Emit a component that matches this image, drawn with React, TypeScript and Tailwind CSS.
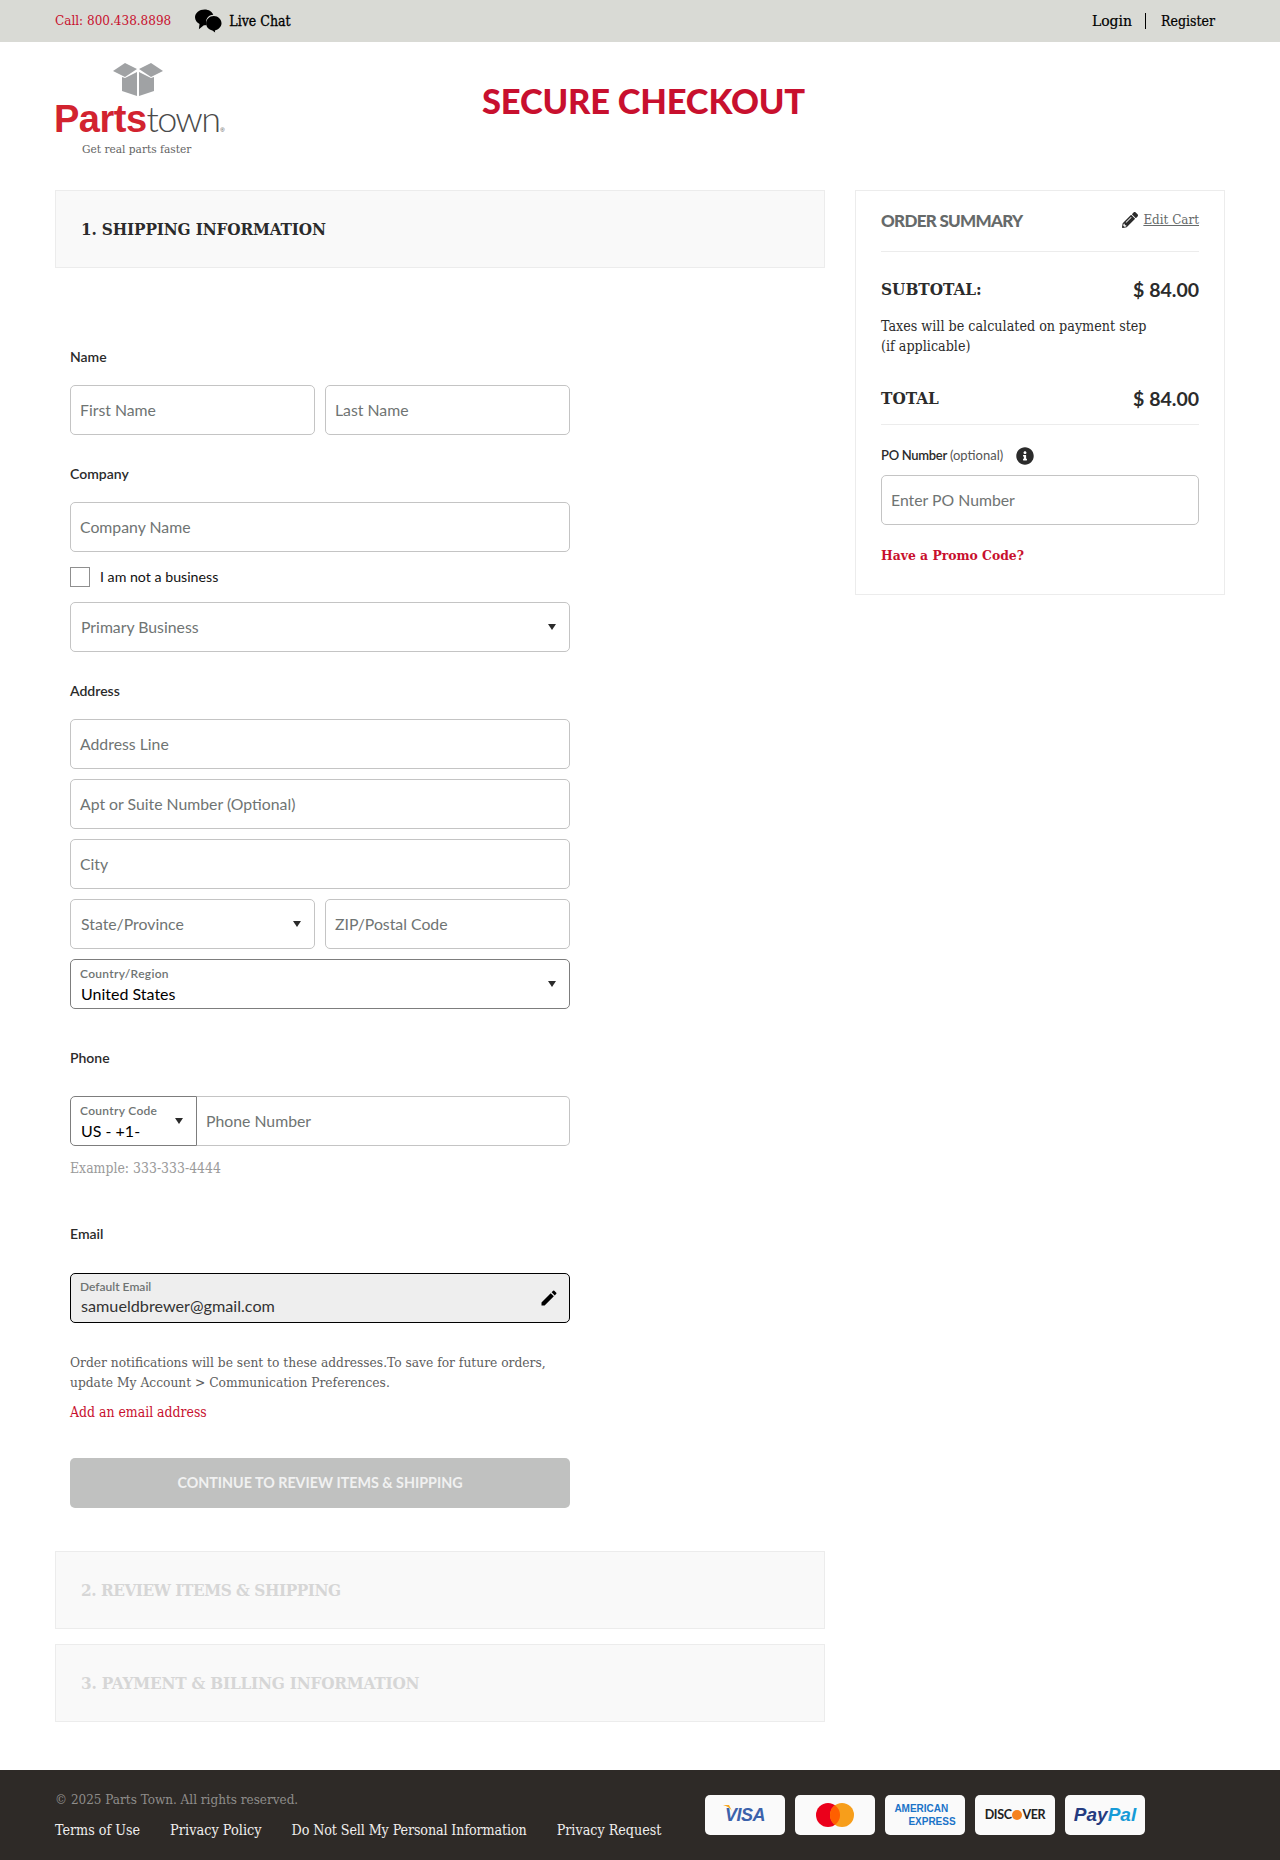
import { FaPencilAlt, FaInfoCircle } from "react-icons/fa";
import { MdEdit } from "react-icons/md";

const sans = "font-['Lato',sans-serif]";
const slab = "font-['DejaVu_Serif_Condensed','DejaVu_Serif',serif]";

function Arrow() {
  return (
    <svg width="8" height="6" viewBox="0 0 8 6" className="shrink-0">
      <polygon points="0,0 8,0 4,6" fill="#2b2b2b" />
    </svg>
  );
}

function Label({ children }: { children: React.ReactNode }) {
  return <div className={`${sans} h-5 text-[14px] leading-5 font-semibold text-[#2b2b2b]`}>{children}</div>;
}

function Field({ text, className = "" }: { text: string; className?: string }) {
  return (
    <div className={`${sans} flex h-[50px] items-center rounded-[5px] border border-[#c4c4c4] bg-white px-[9px] text-[15.800px] text-[#6f7473] ${className}`}>
      {text}
    </div>
  );
}

function SelectField({ text, className = "" }: { text: string; className?: string }) {
  return (
    <div className={`${sans} flex h-[50px] items-center justify-between rounded-[5px] border border-[#c4c4c4] bg-white pr-[13px] pl-[10px] text-[15.800px] text-[#6f7473] ${className}`}>
      <span>{text}</span>
      <Arrow />
    </div>
  );
}

function Floating({ label, value, className = "" }: { label: string; value: string; className?: string }) {
  return (
    <div className={`${sans} flex h-[50px] items-center justify-between border border-[#7d7d7d] bg-white pr-[13px] pl-[9px] ${className}`}>
      <div className="flex h-full flex-col pt-[7px]">
        <span className="text-[12px] leading-[14px] font-semibold tracking-[0.3px] text-[#6f7473]">{label}</span>
        <span className="mt-[2px] pl-px text-[16px] leading-[22px] text-black">{value}</span>
      </div>
      <Arrow />
    </div>
  );
}

function StepBox({ text, className = "" }: { text: string; className?: string }) {
  return (
    <div className={`${slab} flex h-[78px] items-center border border-[#ececec] bg-[#f9f9f9] px-[25px] pt-[2px] text-[17px] font-bold ${className}`}>
      {text}
    </div>
  );
}

function Logo() {
  return (
    <div className="relative h-[110px] w-[172px] pt-[20px]">
      <svg width="50" height="34" viewBox="0 0 50 34" className="ml-[58px] block">
        <polygon points="0,9 12,1 24,7 12,15" fill="#a0a2a4" />
        <polygon points="26,7 38,1 50,9 38,15" fill="#a0a2a4" />
        <polygon points="9,15 12,16 24,10 24,34 9,29" fill="#a0a2a4" />
        <polygon points="26,10 38,16 41,15 41,29 26,34" fill="#a0a2a4" />
      </svg>
      <div className="mt-[3px] -ml-px flex items-baseline text-[38px] leading-[38px] tracking-[-0.5px]">
        <span className="font-['Liberation_Sans',sans-serif] font-bold text-[#d2232f]">Parts</span>
        <span className="font-['Lato',sans-serif] text-[36px] font-light tracking-[-1.700px] text-[#4a4a4a]">town</span>
        <span className="ml-px font-['Liberation_Sans',sans-serif] text-[6px] leading-none text-[#4a4a4a]">®</span>
      </div>
      <div className={`${slab} mt-[4px] pl-[27px] text-[11.800px] leading-[15px] text-[#636363]`}>Get real parts faster</div>
    </div>
  );
}

function Chat() {
  return (
    <svg width="27" height="24" viewBox="0 0 28 24">
      <path d="M10 0C4.500 0 0 3.600 0 8.200c0 3 1.900 5.500 4.700 7L4 20.500l5.200-4.200c.9 0 1.800 0 2.800-.2C10 10 14 5.800 19 5.600 17.800 2.300 14.300 0 10 0z" fill="#000" />
      <path d="M19.500 6.800c-4.500 0-8 3.400-8 7.600 0 3.700 2.800 6.800 6.500 7.400l2.900 2.200-.3-2.200c3.800-.9 6.900-3.900 6.900-7.400 0-4.200-3.500-7.600-8-7.600z" fill="#000" />
    </svg>
  );
}

function PayCard({ children }: { children: React.ReactNode }) {
  return <div className="flex h-10 w-20 items-center justify-center overflow-hidden rounded-[5px] bg-[#fafafa]">{children}</div>;
}

export default function App() {
  return (
    <div className={`${slab} min-h-[1860px] bg-white`}>
      <div className="flex h-[42px] items-center justify-between bg-[#d9dad5] pr-[65px] pl-[55px] text-[14px]">
        <div className="flex items-center">
          <span className="text-[13.400px] text-[#c8102e]">Call: 800.438.8898</span>
          <span className="ml-6 flex items-center gap-[7px] text-black">
            <Chat />
            <span className="[-webkit-text-stroke:0.3px_#000]">Live Chat</span>
          </span>
        </div>
        <div className="flex items-center text-black [-webkit-text-stroke:0.2px_#000]">
          <span className="mt-px text-[15.500px]">Login</span>
          <span className="mr-[15px] ml-[13px] h-4 w-px bg-black" />
          <span>Register</span>
        </div>
      </div>

      <div className="flex h-[148px] items-start px-[55px]">
        <Logo />
        <h1 className={`${sans} mt-[37px] ml-[255px] text-[34.500px] leading-11 font-black tracking-[-0.2px] text-[#c8102e]`}>SECURE CHECKOUT</h1>
      </div>

      <div className="flex gap-[30px] px-[55px]">
        <div className="w-[770px]">
          <StepBox text="1. SHIPPING INFORMATION" className="tracking-[-0.15px] text-[#2b2b2b]" />

          <div className="mt-[79px] w-[515px] pl-[15px]">
            <Label>Name</Label>
            <div className="mt-[18px] grid grid-cols-2 gap-[10px]">
              <Field text="First Name" />
              <Field text="Last Name" />
            </div>

            <div className="mt-[29px]"><Label>Company</Label></div>
            <Field text="Company Name" className="mt-[18px]" />
            <div className={`${sans} mt-[15px] flex h-5 items-center gap-[10px] text-[14.200px] text-[#111]`}>
              <span className="h-5 w-5 border border-[#8f8f8f] bg-white" />
              <span className="-mt-px">I am not a business</span>
            </div>
            <SelectField text="Primary Business" className="mt-[15px]" />

            <div className="mt-[29px]"><Label>Address</Label></div>
            <div className="mt-[18px] flex flex-col gap-[10px]">
              <Field text="Address Line" />
              <Field text="Apt or Suite Number (Optional)" />
              <Field text="City" />
              <div className="grid grid-cols-2 gap-[10px]">
                <SelectField text="State/Province" />
                <Field text="ZIP/Postal Code" />
              </div>
              <Floating label="Country/Region" value="United States" className="rounded-[5px]" />
            </div>

            <div className="mt-[39px]"><Label>Phone</Label></div>
            <div className="mt-[28px] flex">
              <Floating label="Country Code" value="US - +1-" className="w-[127px] rounded-l-[5px]" />
              <Field text="Phone Number" className="flex-1 rounded-l-none border-l-0" />
            </div>
            <div className="mt-3 text-[13.900px] leading-5 text-[#9a9a9a]">Example: 333-333-4444</div>

            <div className="mt-[46px]"><Label>Email</Label></div>
            <div className={`${sans} mt-[29px] flex h-[50px] items-center justify-between rounded-[5px] border border-black bg-[#eeeeee] pr-[10px] pl-[9px]`}>
              <div className="flex h-full flex-col pt-[6px]">
                <span className="text-[12px] leading-[14px] font-semibold text-[#6f7473]">Default Email</span>
                <span className="mt-[1px] pl-px text-[16.200px] leading-[22px] text-[#333]">samueldbrewer@gmail.com</span>
              </div>
              <MdEdit className="text-[20px] text-black" />
            </div>

            <p className="mt-[29px] text-[13.650px] leading-5 text-[#5d5d5d]">
              Order notifications will be sent to these addresses.To save for future orders,<br />
              update My Account &gt; Communication Preferences.
            </p>
            <div className="mt-[10px] text-[13.900px] leading-5 text-[#c8102e]">Add an email address</div>

            <div className={`${sans} mt-9 flex h-[50px] items-center justify-center rounded-[5px] bg-[#c0c1c0] pb-px text-[14.300px] font-bold text-[#f1f1f1]`}>
              CONTINUE TO REVIEW ITEMS &amp; SHIPPING
            </div>
          </div>

          <div className="mt-[43px] flex flex-col gap-[15px]">
            <StepBox text="2. REVIEW ITEMS & SHIPPING" className="tracking-[-0.45px] text-[#d6d6d6]" />
            <StepBox text="3. PAYMENT & BILLING INFORMATION" className="tracking-[-0.2px] text-[#d6d6d6]" />
          </div>
        </div>

        <aside className="h-[405px] w-[370px] border border-[#ececec] px-[25px] text-[#2b2b2b]">
          <div className="flex h-[61px] items-start justify-between border-b border-[#ececec] pt-[18px]">
            <span className={`${sans} text-[17px] leading-6 font-black tracking-[-0.7px] text-[#666a6a]`}>ORDER SUMMARY</span>
            <span className="mt-px flex items-center gap-[5px] text-[13.300px] leading-5 text-[#666a6a] underline">
              <FaPencilAlt className="text-[16px] text-[#2b2b2b]" />
              Edit Cart
            </span>
          </div>
          <div className="mt-[26px] flex h-6 items-center justify-between">
            <span className="text-[17px] font-bold">SUBTOTAL:</span>
            <span className={`${sans} text-[19.500px] font-bold`}>$ 84.00</span>
          </div>
          <p className="mt-[14px] text-[14.200px] leading-5">
            Taxes will be calculated on payment step<br />(if applicable)
          </p>
          <div className="mt-[31px] flex h-6 items-center justify-between">
            <span className="text-[17px] font-bold">TOTAL</span>
            <span className={`${sans} text-[19.500px] font-bold`}>$ 84.00</span>
          </div>
          <div className="mt-[13px] border-b border-[#ececec]" />
          <div className={`${sans} mt-[21px] flex h-5 items-center text-[13px]`}>
            <span className="font-semibold tracking-[-0.3px]">PO Number</span>
            <span className="ml-[3px] text-[#555]">(optional)</span>
            <FaInfoCircle className="ml-[13px] text-[18px] text-[#2b2b2b]" />
          </div>
          <Field text="Enter PO Number" className="mt-[9px]" />
          <div className="mt-[20px] text-[13.750px] leading-5 font-bold text-[#c8102e]">Have a Promo Code?</div>
        </aside>
      </div>

      <footer className="mt-12 flex h-[90px] bg-[#2e2a27] px-[55px]">
        <div className="w-[650px] pt-5">
          <div className="text-[13.400px] leading-5 text-[#8f8d8b]">© 2025 Parts Town. All rights reserved.</div>
          <div className="mt-[10px] flex gap-[30px] text-[14.200px] leading-5 text-[#f0efee]">
            <span>Terms of Use</span>
            <span className="text-[14.400px]">Privacy Policy</span>
            <span className="tracking-[-0.12px]">Do Not Sell My Personal Information</span>
            <span>Privacy Request</span>
          </div>
        </div>
        <div className="pt-[25px]">
          <div className="flex gap-[10px]">
            <PayCard>
              <span className="relative font-['Liberation_Sans',sans-serif] text-[18px] font-bold tracking-[-0.5px] text-[#3c62ab] italic">
                <svg width="10" height="6" viewBox="0 0 10 6" className="absolute top-[3px] -left-[2px]">
                  <path d="M0 0h6l3 6C7 3 4 1 0 0z" fill="#f7a823" />
                </svg>
                VISA
              </span>
            </PayCard>
            <PayCard>
              <svg width="38" height="24" viewBox="0 0 38 24">
                <circle cx="12" cy="12" r="12" fill="#eb001b" />
                <circle cx="26" cy="12" r="12" fill="#f79e1b" />
                <path d="M19 2.200a12 12 0 0 1 0 19.600a12 12 0 0 1 0-19.600z" fill="#ff5f00" />
              </svg>
            </PayCard>
            <PayCard>
              <div className="font-['Liberation_Sans',sans-serif] text-[10px] leading-[13px] font-bold text-[#1a73c8]">
                <div>AMERICAN</div>
                <div className="pl-[14px]">EXPRESS</div>
              </div>
            </PayCard>
            <PayCard>
              <div className={`${sans} flex items-center text-[12.500px] font-bold tracking-[-0.4px] text-[#222]`}>
                DISC<span className="mx-[0.5px] h-[10px] w-[10px] rounded-full bg-[#f58220]" />VER
              </div>
            </PayCard>
            <PayCard>
              <span className="font-['Liberation_Sans',sans-serif] text-[19px] font-bold italic">
                <span className="text-[#253b80]">Pay</span>
                <span className="text-[#179bd7]">Pal</span>
              </span>
            </PayCard>
          </div>
        </div>
      </footer>
    </div>
  );
}
